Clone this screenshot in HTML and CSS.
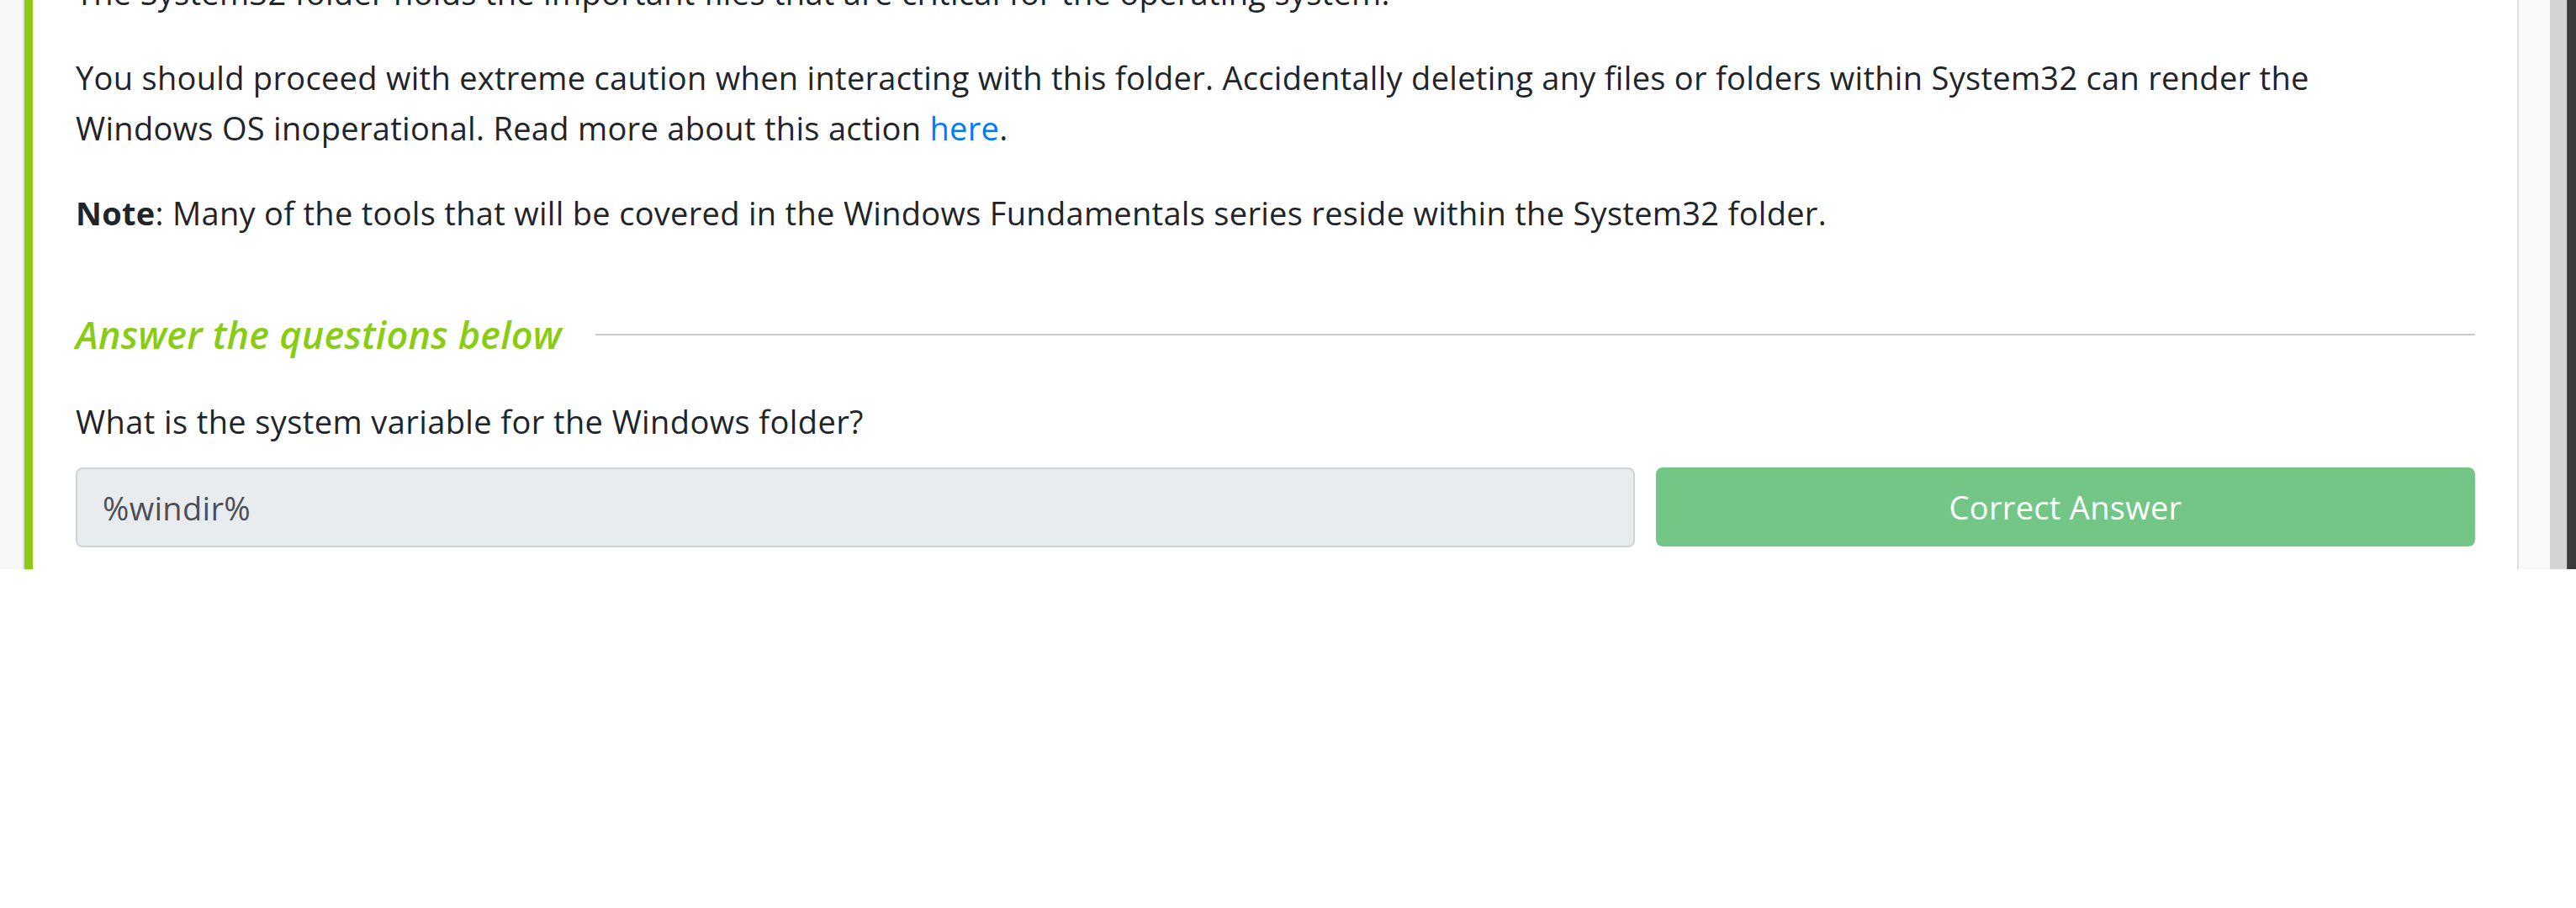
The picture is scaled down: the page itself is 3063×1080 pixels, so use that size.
FILE: index.html
```html
<!DOCTYPE html>
<html lang="en">
<head>
<meta charset="utf-8">
<title>Windows Fundamentals - System32</title>
<link rel="stylesheet" href="styles.css">
</head>
<body>
<div class="viewport">
  <div class="gutter-left"></div>
  <main class="card">
    <div class="task-body">
      <p>The System32 folder holds the important files that are critical for the operating system.</p>
      <p>You should proceed with extreme caution when interacting with this folder. Accidentally deleting any files or folders within System32 can render the Windows OS inoperational. Read more about this action <a href="#" class="link">here</a>.</p>
      <p class="last"><strong>Note</strong>: Many of the tools that will be covered in the Windows Fundamentals series reside within the System32 folder.</p>
    </div>
    <section class="questions">
      <div class="q-header">
        <h5 class="q-title">Answer the questions below</h5>
        <div class="q-rule"></div>
      </div>
      <p class="q-text">What is the system variable for the Windows folder?</p>
      <div class="q-row">
        <input class="q-input" type="text" value="%windir%" readonly>
        <button class="q-btn" type="button">Correct Answer</button>
      </div>
    </section>
  </main>
  <div class="gutter-right">
    <div class="gr-light"></div>
    <div class="gr-track"></div>
    <div class="gr-dark"></div>
  </div>
</div>
</body>
</html>
```

FILE: styles.css
```css
html, body {
  margin: 0;
  padding: 0;
  background: #ffffff;
}

body {
  font-family: "Open Sans", "Noto Sans", sans-serif;
  color: #212529;
}

.viewport {
  display: flex;
  height: 677px;
  overflow: hidden;
  width: 3063px;
}

.gutter-left {
  width: 27px;
  flex: none;
  background: #f8f8f8;
  border-right: 2px solid #dedede;
}

.card {
  flex: 1;
  min-width: 0;
  background: #ffffff;
  border-left: 10px solid #88cc14;
  padding: 0 50px 0 51px;
}

.task-body {
  margin-top: -39px;
}

.task-body p {
  margin: 0 0 41px 0;
  max-width: 2800px;
  font-size: 38px;
  line-height: 60px;
  letter-spacing: 0.3px;
}

.task-body p.last {
  margin-bottom: 0;
}

.task-body strong {
  font-weight: 700;
}

.link {
  color: #007bff;
  text-decoration: none;
}

.questions {
  margin-top: 88px;
}

.q-header {
  display: flex;
  align-items: center;
  gap: 40px;
}

.q-title {
  margin: 0;
  font-size: 45px;
  line-height: 54px;
  font-style: italic;
  font-weight: 600;
  color: #88cc14;
  letter-spacing: 0.2px;
  white-space: nowrap;
}

.q-rule {
  flex: 1;
  height: 2px;
  background: #cccccc;
}

.q-text {
  margin: 46px 0 25px 0;
  font-size: 38px;
  line-height: 60px;
  letter-spacing: 0.4px;
}

.q-row {
  display: grid;
  grid-template-columns: 1854px 1fr;
  gap: 25px;
}

.q-input {
  box-sizing: border-box;
  height: 95px;
  margin: 0;
  border: 2px solid #ced4da;
  border-radius: 8px;
  background: #e9ecef;
  color: #495057;
  font-family: "Open Sans", "Noto Sans", sans-serif;
  font-size: 38px;
  letter-spacing: 0.3px;
  padding: 0 30px;
  outline: none;
}

.q-btn {
  box-sizing: border-box;
  height: 94px;
  margin: 0;
  border: none;
  border-radius: 8px;
  background: #74c686;
  color: #ffffff;
  font-family: "Open Sans", "Noto Sans", sans-serif;
  font-size: 38px;
  letter-spacing: 0.3px;
}

.gutter-right {
  display: flex;
  flex: none;
  border-left: 2px solid #e0e0e0;
}

.gr-light {
  width: 37px;
  background: #f9f9f9;
}

.gr-track {
  width: 20px;
  background: #d4d4d4;
}

.gr-dark {
  width: 10px;
  background: #3a3a3a;
  border-left: 1px solid #555555;
}
```
